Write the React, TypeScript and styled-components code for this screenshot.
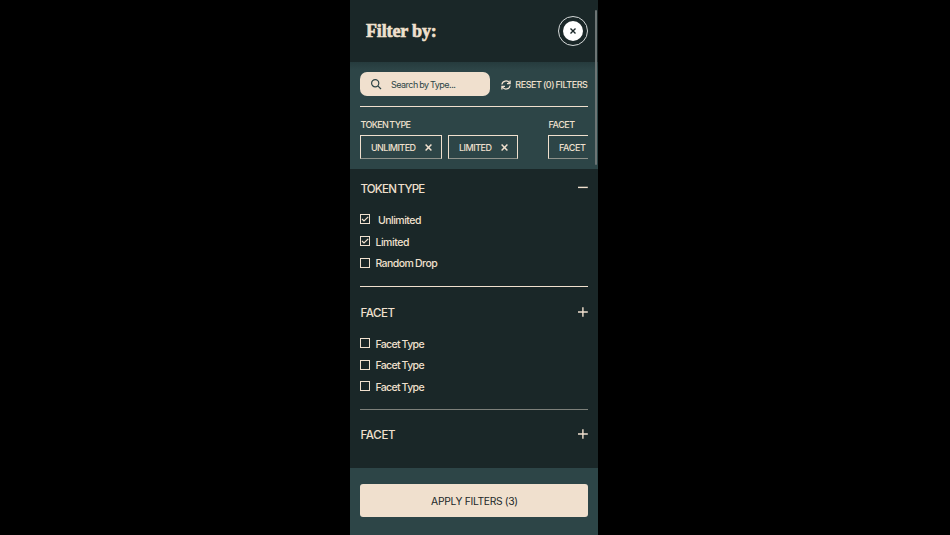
import React from "react";
import styled, { createGlobalStyle } from "styled-components";

const cream = "#f0e0ce";
const dark = "#1a2728";
const teal = "#2d4547";

const GlobalStyle = createGlobalStyle`
  * { box-sizing: border-box; }
  html, body { margin: 0; background: #000; overflow: hidden; }
  body { font-family: Inter, "Liberation Sans", sans-serif; color: ${cream}; }
  button, input { font-family: inherit; margin: 0; padding: 0; border: 0; background: none; color: inherit; }
  svg { display: block; flex: none; }
`;

const Page = styled.main`
  height: 535px;
  display: flex;
  justify-content: center;
  padding-right: 2px;
  background: #000;
`;

const Panel = styled.section`
  position: relative;
  width: 248px;
  height: 535px;
  display: flex;
  flex-direction: column;
  background: ${dark};
  overflow: hidden;
`;

const Header = styled.header`
  height: 62px;
  flex: none;
  display: flex;
  align-items: center;
  justify-content: space-between;
  padding: 0 10px 0 16px;
`;

const Title = styled.h1`
  margin: 0;
  font: 700 18px/22px "Liberation Serif", serif;
  letter-spacing: -0.15px;
  -webkit-text-stroke: 0.6px ${cream};
  white-space: nowrap;
`;

const CloseButton = styled.button`
  width: 30px;
  height: 30px;
  display: grid;
  place-items: center;
  border: 1px solid #d5d9d9;
  border-radius: 50%;
`;

const CloseDisc = styled.span`
  width: 20px;
  height: 20px;
  display: grid;
  place-items: center;
  border-radius: 50%;
  background: #fff;
  color: ${dark};
`;

const ActiveFilters = styled.div`
  height: 107px;
  flex: none;
  padding: 10px 10.5px 0 10.4px;
  background: linear-gradient(#263b3d, ${teal} 8px);
`;

const SearchRow = styled.div`
  height: 35px;
  display: flex;
  align-items: flex-start;
  justify-content: space-between;
  border-bottom: 1px solid ${cream};
`;

const SearchBox = styled.label`
  width: 129.6px;
  height: 24px;
  display: flex;
  align-items: center;
  gap: 9px;
  padding: 1px 0 0 10.6px;
  border-radius: 7px;
  background: ${cream};
  color: ${teal};
`;

const Label = styled.span<{ $size: number; $track?: number; $word?: number; $weight?: number }>`
  font-size: ${(p) => p.$size}px;
  line-height: 14px;
  font-weight: ${(p) => p.$weight ?? 500};
  letter-spacing: ${(p) => p.$track ?? 0}px;
  word-spacing: ${(p) => p.$word ?? 0}px;
  white-space: nowrap;
`;

const ResetButton = styled.button`
  height: 24px;
  display: flex;
  align-items: center;
  gap: 4.5px;
  padding-top: 1px;
`;

const ChipGroups = styled.div`
  display: flex;
  gap: 30px;
  padding-top: 11px;
  overflow: hidden;
`;

const ChipGroup = styled.div`
  flex: none;
  display: flex;
  flex-direction: column;
  gap: 3px;
`;

const Chips = styled.div`
  display: flex;
  gap: 6px;
`;

const Chip = styled.button<{ $width: number }>`
  width: ${(p) => p.$width}px;
  height: 24px;
  display: flex;
  align-items: center;
  justify-content: space-between;
  padding: 1px 9px 0 9.6px;
  border: 1px solid ${cream};
  border-bottom-color: #8e928b;
`;

const Sections = styled.div`
  flex: 1;
  padding: 0 10.5px 0 10.4px;
`;

const Section = styled.section<{ $height: number; $top: number; $line?: string }>`
  height: ${(p) => p.$height}px;
  padding-top: ${(p) => p.$top}px;
  border-bottom: ${(p) => (p.$line ? `1px solid ${p.$line}` : "0")};
`;

const SectionHead = styled.div<{ $lift?: number }>`
  height: 14px;
  display: flex;
  align-items: center;
  justify-content: space-between;

  svg {
    margin-bottom: ${(p) => p.$lift ?? 0}px;
  }
`;

const Options = styled.div`
  padding-top: 13px;
`;

const Option = styled.label<{ $gap?: number }>`
  height: 21.7px;
  display: flex;
  align-items: center;
  gap: ${(p) => p.$gap ?? 5}px;
`;

const Box = styled.span`
  width: 10px;
  height: 10px;
  display: grid;
  place-items: center;
  margin-bottom: 1px;
  border: 1px solid ${cream};
`;

const OptionText = styled(Label)`
  padding-top: 2.4px;
`;

const Footer = styled.footer`
  height: 67px;
  flex: none;
  padding: 16px 10.5px 0 10.4px;
  background: ${teal};
`;

const ApplyButton = styled.button`
  width: 100%;
  height: 33px;
  display: flex;
  align-items: center;
  justify-content: center;
  padding: 1px 0 0 1px;
  border-radius: 3px;
  background: ${cream};
  color: ${dark};
`;

const ScrollThumb = styled.div`
  position: absolute;
  top: 10px;
  right: 1px;
  width: 2px;
  height: 155px;
  border-radius: 1px;
  background: #6d7575;
`;

const Cross = ({ size, width }: { size: number; width: number }) => (
  <svg width={size} height={size} viewBox="0 0 6 6" stroke="currentColor" strokeWidth={width}>
    <path d="M.5.5l5 5M5.5.5l-5 5" />
  </svg>
);

const SearchIcon = () => (
  <svg width="11" height="11" viewBox="0 0 11 11" fill="none" stroke="currentColor" strokeWidth="1.2">
    <circle cx="4.2" cy="4.2" r="3.6" />
    <path d="M6.8 6.8L10 10" />
  </svg>
);

const RefreshIcon = () => (
  <svg width="10" height="10" viewBox="0 0 10 10" fill="none" stroke="currentColor" strokeWidth="1.3">
    <path d="M.9 4.5A4.1 4.1 0 0 1 8.5 3M9.1 5.5A4.1 4.1 0 0 1 1.5 7M9.1.4v3.2H6M.9 9.6V6.4H4" />
  </svg>
);

const Toggle = ({ open }: { open?: boolean }) => (
  <svg width="10" height="10" viewBox="0 0 10 10" stroke={cream} strokeWidth="1.4">
    <path d={open ? "M0 3.4h9.8" : "M0 5h9.8M4.9 .2v9.6"} />
  </svg>
);

const CheckOption = ({ text, checked, gap, track }: { text: string; checked?: boolean; gap?: number; track: number }) => (
  <Option $gap={gap}>
    <Box>
      {checked && (
        <svg width="8" height="8" viewBox="0 0 8 8" fill="none" stroke={cream} strokeWidth="1.2">
          <path d="M1 4l2 2L7.2 1.8" />
        </svg>
      )}
    </Box>
    <OptionText $size={10.5} $track={track} $word={-0.4}>{text}</OptionText>
  </Option>
);

const FilterChip = ({ text, width, track }: { text: string; width: number; track: number }) => (
  <Chip $width={width}>
    <Label $size={9} $track={track}>{text}</Label>
    <Cross size={7} width={1.3} />
  </Chip>
);

export default function App() {
  return (
    <Page>
      <GlobalStyle />
      <Panel>
        <Header>
          <Title>Filter by:</Title>
          <CloseButton aria-label="Close">
            <CloseDisc><Cross size={6} width={1.4} /></CloseDisc>
          </CloseButton>
        </Header>
        <ActiveFilters>
          <SearchRow>
            <SearchBox>
              <SearchIcon />
              <Label $size={9} $track={-0.52} $word={-0.5} $weight={400}>Search by Type...</Label>
            </SearchBox>
            <ResetButton>
              <RefreshIcon />
              <Label $size={9} $track={-0.42} $word={-0.6}>RESET (0) FILTERS</Label>
            </ResetButton>
          </SearchRow>
          <ChipGroups>
            <ChipGroup>
              <Label $size={9} $track={-0.6} $word={-0.8}>TOKEN TYPE</Label>
              <Chips>
                <FilterChip text="UNLIMITED" width={82} track={-0.55} />
                <FilterChip text="LIMITED" width={70} track={-0.5} />
              </Chips>
            </ChipGroup>
            <ChipGroup>
              <Label $size={9} $track={-0.4}>FACET</Label>
              <Chips>
                <FilterChip text="FACET" width={66} track={-0.4} />
              </Chips>
            </ChipGroup>
          </ChipGroups>
        </ActiveFilters>
        <Sections>
          <Section $height={118} $top={13} $line={cream}>
            <SectionHead>
              <Label $size={11.5} $track={-0.75} $word={-1}>TOKEN TYPE</Label>
              <Toggle open />
            </SectionHead>
            <Options>
              <CheckOption text="Unlimited" checked gap={7.6} track={-0.5} />
              <CheckOption text="Limited" checked track={-0.45} />
              <CheckOption text="Random Drop" track={-0.56} />
            </Options>
          </Section>
          <Section $height={123} $top={18.5} $line="#7d807a">
            <SectionHead $lift={1}>
              <Label $size={11.5} $track={-0.4}>FACET</Label>
              <Toggle />
            </SectionHead>
            <Options>
              <CheckOption text="Facet Type" track={-0.65} />
              <CheckOption text="Facet Type" track={-0.65} />
              <CheckOption text="Facet Type" track={-0.65} />
            </Options>
          </Section>
          <Section $height={58} $top={17.5}>
            <SectionHead $lift={1}>
              <Label $size={11.5} $track={-0.3}>FACET</Label>
              <Toggle />
            </SectionHead>
          </Section>
        </Sections>
        <Footer>
          <ApplyButton>
            <Label $size={10.3} $track={-0.32} $weight={400}>APPLY FILTERS (3)</Label>
          </ApplyButton>
        </Footer>
        <ScrollThumb />
      </Panel>
    </Page>
  );
}
